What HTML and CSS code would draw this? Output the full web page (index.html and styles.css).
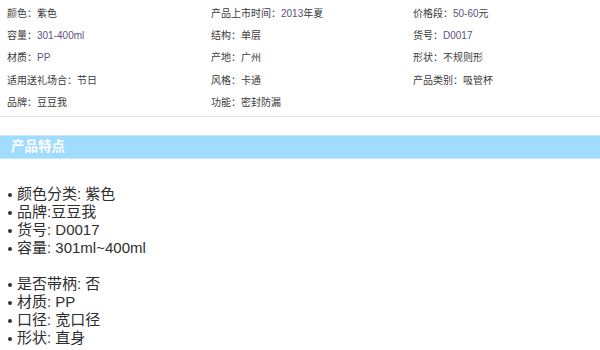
FILE: index.html
```html
<!DOCTYPE html>
<html lang="zh-CN">
<head>
    <meta charset="UTF-8">
    <meta name="viewport" content="width=device-width, initial-scale=1.0">
    <title>产品详情</title>
    <link rel="stylesheet" href="styles.css">
</head>
<body>
    <ul class="attributes">
        <li>颜色：紫色</li>
        <li>产品上市时间：<span class="num">2013</span>年夏</li>
        <li>价格段：<span class="num">50-60</span>元</li>
        <li>容量：<span class="num">301-400ml</span></li>
        <li>结构：单层</li>
        <li>货号：<span class="num">D0017</span></li>
        <li>材质：<span class="num">PP</span></li>
        <li>产地：广州</li>
        <li>形状：不规则形</li>
        <li>适用送礼场合：节日</li>
        <li>风格：卡通</li>
        <li>产品类别：吸管杯</li>
        <li>品牌：豆豆我</li>
        <li>功能：密封防漏</li>
    </ul>

    <h3 class="section-title">产品特点</h3>

    <ul class="features">
        <li>颜色分类: 紫色</li>
        <li>品牌:豆豆我</li>
        <li>货号: D0017</li>
        <li>容量: 301ml~400ml</li>
    </ul>
    <ul class="features">
        <li>是否带柄: 否</li>
        <li>材质: PP</li>
        <li>口径: 宽口径</li>
        <li>形状: 直身</li>
    </ul>
</body>
</html>
```

FILE: styles.css
```css
body {
    margin: 0;
    background: #fff;
    color: #333;
    font-family: "Liberation Sans", "Noto Sans CJK SC", sans-serif;
}
ul {
    list-style: none;
    margin: 0;
    padding: 0;
}

/* attribute table, three columns */
.attributes {
    display: grid;
    grid-template-columns: 204px 202px 1fr;
    grid-auto-rows: 22.3px;
    align-items: center;
    padding: 1px 0 4px 7px;
    border-bottom: 1px solid #e2e2e2;
    font-size: 10px;
    color: #3a3a3a;
}
.attributes .num {
    color: #5e517f;
}

.section-title {
    margin: 18px 0 0;
    height: 22px;
    line-height: 22px;
    padding-left: 11px;
    background: #a0dcfe;
    border-top: 1px solid #c6ebff;
    border-bottom: 1px solid #c6ebff;
    color: #fff;
    font-size: 13.5px;
    font-weight: bold;
}

.features {
    font-size: 15px;
    line-height: 18px;
    color: #2e2e2e;
}
.section-title + .features {
    margin-top: 26px;
}
.features + .features {
    margin-top: 18px;
}
.features li {
    display: flex;
    align-items: center;
}
.features li::before {
    content: "";
    width: 4px;
    height: 4px;
    border-radius: 50%;
    background: #333;
    margin: 1px 5px 0 8px;
}
```
